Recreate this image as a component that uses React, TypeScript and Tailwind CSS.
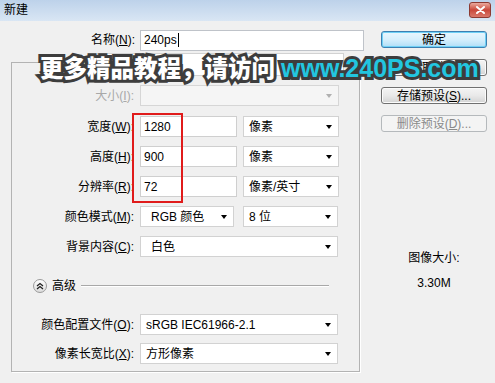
import React from "react";

function U({ c }: { c: string }) {
  return <span className="underline underline-offset-[1px]">{c}</span>;
}

function Arrow({ disabled }: { disabled?: boolean }) {
  return (
    <span
      className={`block w-0 h-0 border-x-[3.5px] border-x-transparent border-t-[4px] ${
        disabled ? "border-t-[#b0b0b0]" : "border-t-black"
      }`}
    />
  );
}

function Combo({ cls, text, disabled }: { cls: string; text?: string; disabled?: boolean }) {
  return (
    <div
      className={`flex items-center justify-between border pl-[5px] pr-[6px] ${
        disabled ? "border-[#d6d6d6] bg-[#f5f5f5]" : "border-[#d2d2d2] bg-white"
      } ${cls}`}
    >
      <span className="text-[12px] leading-none text-black whitespace-nowrap">{text}</span>
      <Arrow disabled={disabled} />
    </div>
  );
}

function Field({ text }: { text: string }) {
  return (
    <div className="flex items-center w-[97px] h-[21px] border border-[#cfcfcf] bg-white pl-[3px] text-[12px] leading-none text-black">
      {text}
    </div>
  );
}

function Label({ children }: { children: React.ReactNode }) {
  return (
    <div className="w-[122px] shrink-0 text-right text-[12px] leading-none text-black whitespace-nowrap">
      {children}
    </div>
  );
}

function Btn({ children, kind }: { children: React.ReactNode; kind?: "default" | "disabled" }) {
  const base =
    "flex items-center justify-center w-[106px] h-[17px] rounded-[3px] border text-[12px] leading-none";
  if (kind === "default")
    return (
      <div
        className={`${base} border-[#3c7fb1] bg-linear-to-b from-[#eaf6fd] via-[#d6effc] to-[#b0def7] shadow-[inset_0_0_0_1px_#6fd0f5] text-black`}
      >
        {children}
      </div>
    );
  if (kind === "disabled")
    return (
      <div className={`${base} border-[#b5b9bc] bg-[#f4f4f4] text-[#8a8a8a]`}>{children}</div>
    );
  return (
    <div
      className={`${base} border-[#707070] bg-linear-to-b from-[#f4f4f4] via-[#e9e9e9] to-[#d3d3d3] shadow-[inset_0_0_0_1px_#fbfbfb] text-black`}
    >
      {children}
    </div>
  );
}

export default function App() {
  return (
    <div className="relative w-[495px] h-[383px] overflow-hidden bg-[#f0f0f0] font-['Liberation_Sans','Noto_Sans_CJK_SC',sans-serif] text-black">
      {/* Title bar */}
      <div className="flex items-start justify-between h-[21px] bg-linear-to-b from-[#bdd2ea] to-[#d9e6f4] pl-[4px] pr-[4px]">
        <span className="mt-[4px] text-[12px] leading-[13px] text-black">新建</span>
        <div className="mt-[2px] flex items-center justify-center w-[22px] h-[16px] rounded-[3px] border border-[#8c3a32] bg-linear-to-b from-[#e9a99e] via-[#c9473b] to-[#d9786b]">
          <svg width="9" height="8" viewBox="0 0 9 8">
            <path d="M1 1 L8 7 M8 1 L1 7" stroke="white" strokeWidth="2" strokeLinecap="round" />
          </svg>
        </div>
      </div>

      {/* Body */}
      <div className="flex">
        {/* Left */}
        <div className="w-[370px] shrink-0">
          <div className="mt-[9px] flex items-center h-[20px]">
            <div className="w-[135px] text-right text-[12px] leading-none whitespace-nowrap">
              名称(<U c="N" />):
            </div>
            <div className="ml-[5px] flex items-center w-[224px] h-[21px] border border-[#bfc3c9] bg-white pl-[3px] text-[12px] leading-none">
              240ps
              <span className="ml-[1px] w-px h-[14px] bg-black" />
            </div>
          </div>

          {/* Group box */}
          <div className="mt-[12px] ml-[11px] w-[349px] h-[310px] border border-[#b3b3b3] shadow-[1px_1px_0_#ffffff]">
            {/* Preset */}
            <div className="-mt-[10px] flex items-center h-[23px]">
              <div className="w-[79px] text-right text-[12px] leading-none whitespace-nowrap">
                <span className="bg-[#f0f0f0] pl-[2px]">
                  预设(<U c="P" />):
                </span>
              </div>
              <Combo cls="ml-[6px] w-[247px] h-[23px]" text="剪贴板" />
            </div>

            <div className="mt-[9px] flex items-center h-[21px]">
              <Label>
                <span className="text-[#a8a8a8]">
                  大小(<U c="I" />):
                </span>
              </Label>
              <Combo cls="ml-[6px] w-[199px] h-[21px]" disabled />
            </div>

            <div className="mt-[10px] flex items-center h-[21px]">
              <Label>
                宽度(<U c="W" />):
              </Label>
              <div className="ml-[6px]">
                <Field text="1280" />
              </div>
              <Combo cls="ml-[6px] w-[96px] h-[21px]" text="像素" />
            </div>

            <div className="mt-[9px] flex items-center h-[21px]">
              <Label>
                高度(<U c="H" />):
              </Label>
              <div className="ml-[6px]">
                <Field text="900" />
              </div>
              <Combo cls="ml-[6px] w-[96px] h-[21px]" text="像素" />
            </div>

            <div className="mt-[9px] flex items-center h-[21px]">
              <Label>
                分辨率(<U c="R" />):
              </Label>
              <div className="ml-[6px]">
                <Field text="72" />
              </div>
              <Combo cls="ml-[6px] w-[96px] h-[21px]" text="像素/英寸" />
            </div>

            <div className="mt-[9px] flex items-center h-[21px]">
              <Label>
                颜色模式(<U c="M" />):
              </Label>
              <Combo cls="ml-[6px] w-[94px] h-[21px] !pl-[10px]" text="RGB 颜色" />
              <Combo cls="ml-[9px] w-[95px] h-[21px]" text="8 位" />
            </div>

            <div className="mt-[9px] flex items-center h-[21px]">
              <Label>
                背景内容(<U c="C" />):
              </Label>
              <Combo cls="ml-[6px] w-[198px] h-[21px] !pl-[10px]" text="白色" />
            </div>

            {/* Advanced */}
            <div className="mt-[21px] flex items-center h-[15px]">
              <div className="ml-[21px] flex items-center justify-center w-[14px] h-[14px] rounded-full border border-[#9a9a9a] bg-linear-to-b from-[#ffffff] to-[#dcdcdc]">
                <svg width="8" height="8" viewBox="0 0 8 8">
                  <path d="M1 4 L4 1.5 L7 4 M1 7 L4 4.5 L7 7" stroke="#222" strokeWidth="1.3" fill="none" />
                </svg>
              </div>
              <span className="ml-[5px] text-[12px] leading-none">高级</span>
              <div className="ml-[5px] mr-[30px] flex-1 h-[2px] border-t border-[#a8a8a8] border-b border-b-white" />
            </div>

            <div className="mt-[21px] flex items-center h-[21px]">
              <Label>
                颜色配置文件(<U c="O" />):
              </Label>
              <Combo cls="ml-[6px] w-[198px] h-[21px] !pl-[5px]" text="sRGB IEC61966-2.1" />
            </div>

            <div className="mt-[8px] flex items-center h-[21px]">
              <Label>
                像素长宽比(<U c="X" />):
              </Label>
              <Combo cls="ml-[6px] w-[198px] h-[21px] !pl-[5px]" text="方形像素" />
            </div>
          </div>
        </div>

        {/* Right */}
        <div className="ml-[11px] mt-[10px] flex flex-col items-center w-[106px]">
          <div className="flex flex-col gap-[11px]">
            <Btn kind="default">确定</Btn>
            <Btn>取消</Btn>
            <Btn>
              存储预设(<U c="S" />)...
            </Btn>
            <Btn kind="disabled">
              删除预设(<U c="D" />)...
            </Btn>
          </div>
          <div className="mt-[119px] h-[14px] text-[12px] leading-[14px]">图像大小:</div>
          <div className="mt-[11px] h-[14px] text-[12px] leading-[14px]">3.30M</div>
        </div>
      </div>

      {/* Red annotation rectangle */}
      <div className="absolute left-[132px] top-[113px] w-[51px] h-[90px] border-2 border-[#e01b1b]" />

      {/* Watermark */}
      <div className="absolute left-[40px] top-[56px] flex items-baseline whitespace-nowrap [paint-order:stroke_fill] [-webkit-text-stroke:6px_#3d3d3d]">
        <span className="font-['Noto_Sans_CJK_SC',sans-serif] font-black text-[23.5px] leading-none text-white">
          更多精品教程，请访问
        </span>
        <span className="ml-[6px] font-['Liberation_Sans',sans-serif] font-bold text-[25px] leading-none text-[#22c6e0]">
          www.240PS.com
        </span>
      </div>
    </div>
  );
}
